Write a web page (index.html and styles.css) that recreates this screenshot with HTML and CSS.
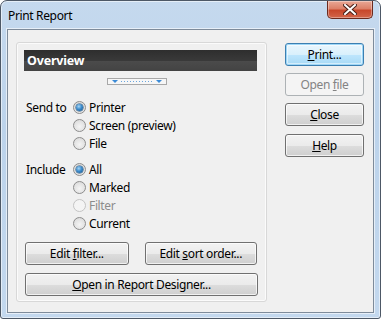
FILE: index.html
```html
<!DOCTYPE html>
<html lang="en">
<head>
  <meta charset="UTF-8" />
  <title>Print Report</title>
  <link rel="stylesheet" href="styles.css">
</head>
<body>
  <div class="window">
    <div class="titlebar">
      <span class="title">Print Report</span>
      <div class="close-btn">
        <svg width="14" height="11" viewBox="0 0 14 11">
          <path d="M2 1 L12 10 M12 1 L2 10" stroke="#4a2018" stroke-width="4" stroke-linecap="square"/>
          <path d="M2 1 L12 10 M12 1 L2 10" stroke="#fff" stroke-width="2" stroke-linecap="square"/>
        </svg>
      </div>
    </div>

    <div class="client">
      <!-- left group -->
      <div class="panel">
        <div class="panel-head">Overview</div>
        <div class="splitter">
          <svg width="58" height="5" viewBox="0 0 58 5">
            <path d="M4 1 L10 1 L7 4 Z" fill="#3a8ad6"/>
            <path d="M48 1 L54 1 L51 4 Z" fill="#3a8ad6"/>
            <line x1="13" y1="2.5" x2="46" y2="2.5" stroke="#6aa6de" stroke-width="1" stroke-dasharray="1 2"/>
          </svg>
        </div>

        <div class="group first">
          <div class="row">
            <span class="opt-label">Send to</span>
            <span class="radio checked"></span><span>Printer</span>
          </div>
          <div class="row">
            <span class="opt-label"></span>
            <span class="radio"></span><span>Screen (preview)</span>
          </div>
          <div class="row">
            <span class="opt-label"></span>
            <span class="radio"></span><span>File</span>
          </div>
        </div>

        <div class="group">
          <div class="row">
            <span class="opt-label">Include</span>
            <span class="radio checked"></span><span>All</span>
          </div>
          <div class="row">
            <span class="opt-label"></span>
            <span class="radio"></span><span>Marked</span>
          </div>
          <div class="row disabled">
            <span class="opt-label"></span>
            <span class="radio"></span><span>Filter</span>
          </div>
          <div class="row">
            <span class="opt-label"></span>
            <span class="radio"></span><span>Current</span>
          </div>
        </div>

        <div class="btn-row">
          <button class="btn filter-btn">Edit <u>f</u>ilter...</button>
          <button class="btn sort-btn">Edit <u>s</u>ort order...</button>
        </div>
        <button class="btn designer-btn"><u>O</u>pen in Report Designer...</button>
      </div>

      <!-- right buttons -->
      <div class="side">
        <button class="btn default"><u>P</u>rint...</button>
        <button class="btn" disabled>Open <u>f</u>ile</button>
        <button class="btn"><u>C</u>lose</button>
        <button class="btn help-btn"><u>H</u>elp</button>
      </div>
    </div>
  </div>
</body>
</html>
```

FILE: styles.css
```css
body {
  margin: 0;
  padding: 0;
  font-family: 'Noto Sans', 'Open Sans', sans-serif;
  font-size: 12px;
  letter-spacing: -0.35px;
  color: #000;
  background: #fff;
}

.window {
  width: 381px;
  height: 319px;
  box-sizing: border-box;
  border: 1px solid #4d5866;
  border-radius: 7px 7px 3px 3px;
  background: linear-gradient(to bottom, #c5d9ee 0%, #bcd3eb 40%, #c3d8ee 100%);
  box-shadow: inset 0 0 0 1px rgba(255, 255, 255, 0.55);
  display: flex;
  flex-direction: column;
  overflow: hidden;
}

.titlebar {
  height: 28px;
  display: flex;
  align-items: flex-start;
  justify-content: space-between;
}

.title {
  margin: 7px 0 0 7px;
  line-height: 16px;
  color: #000;
}

.close-btn {
  width: 46px;
  height: 18px;
  margin-right: 7px;
  box-sizing: border-box;
  border: 1px solid #6b2a1e;
  border-top: none;
  border-radius: 0 0 5px 5px;
  background: linear-gradient(to bottom, #e9a896 0%, #dc8068 45%, #c8472b 55%, #d2654a 100%);
  box-shadow: inset 0 0 0 1px rgba(255, 255, 255, 0.35);
  display: flex;
  align-items: center;
  justify-content: center;
}

.client {
  flex: 1;
  margin: 0 6px 5px 6px;
  background: #f0f0f0;
  border: 1px solid #7e8b9a;
  box-shadow: 0 0 0 1px rgba(255, 255, 255, 0.6);
  display: flex;
  align-items: flex-start;
  padding: 12px 0 0 8px;
}

.panel {
  width: 251px;
  height: 260px;
  box-sizing: border-box;
  border: 1px solid #d8d8d8;
  border-radius: 3px;
  box-shadow: inset 0 0 0 1px #fbfbfb;
  padding: 7px 9px 0 7px;
}

.panel-head {
  height: 21px;
  background: linear-gradient(to bottom, #2e2e2e 0%, #393939 50%, #4b4b4b 52%, #434343 100%);
  color: #fff;
  font-weight: bold;
  font-size: 12.5px;
  letter-spacing: -0.2px;
  line-height: 21px;
  padding-left: 3px;
}

.splitter {
  width: 60px;
  height: 7px;
  box-sizing: border-box;
  margin: 7px 0 0 83px;
  border: 1px solid #a8a8a8;
  background: #f6f6f6;
  display: flex;
}

.group {
  margin-top: 8px;
  padding-left: 2px;
}

.group.first {
  margin-top: 13px;
}

.row {
  height: 18px;
  display: flex;
  align-items: center;
}

.opt-label {
  width: 47px;
}

.radio {
  width: 13px;
  height: 13px;
  box-sizing: border-box;
  border-radius: 50%;
  border: 1px solid #8d8d8d;
  background: radial-gradient(circle at 50% 60%, #f4f4f4 0%, #e2e2e2 60%, #d2d2d2 100%);
  margin-right: 3px;
  display: flex;
  align-items: center;
  justify-content: center;
}

.radio.checked::after {
  content: "";
  width: 7px;
  height: 7px;
  border-radius: 50%;
  background: radial-gradient(circle at 40% 35%, #a8d6f5 0%, #3d8ccc 45%, #114f86 100%);
  box-shadow: 0 0 0 0.5px #1e4d75;
}

.row.disabled {
  color: #8c8c8c;
}

.row.disabled .radio {
  border-color: #c4c4c4;
  background: #f4f4f4;
}

.btn {
  font-family: inherit;
  font-size: 12px;
  letter-spacing: -0.35px;
  color: #000;
  height: 23px;
  padding: 0;
  box-sizing: border-box;
  border: 1px solid #707070;
  border-radius: 3px;
  background: linear-gradient(to bottom, #f2f2f2 0%, #ebebeb 50%, #dddddd 51%, #cfcfcf 100%);
  box-shadow: inset 0 0 0 1px rgba(255, 255, 255, 0.7);
  display: block;
}

.btn u {
  text-underline-offset: 1px;
}

.btn-row {
  display: flex;
  gap: 16px;
  margin: 10px 0 0 1px;
}

.filter-btn {
  width: 104px;
}

.sort-btn {
  width: 113px;
}

.designer-btn {
  width: 233px;
  margin: 8px 0 0 1px;
}

.side {
  width: 79px;
  margin: 1px 0 0 18px;
  display: flex;
  flex-direction: column;
  gap: 7px;
}

.side .btn {
  width: 79px;
}

.btn.default {
  border-color: #3c7fb1;
  background: linear-gradient(to bottom, #eaf6fd 0%, #d9f0fc 50%, #bee6fd 51%, #a7d9f5 100%);
  box-shadow: inset 0 0 0 1px #9fd7f7, inset 0 0 0 2px rgba(255, 255, 255, 0.5);
}

.btn:disabled {
  border-color: #adb2b5;
  background: #f4f4f4;
  color: #838383;
  box-shadow: none;
}

.help-btn {
  margin-top: 1px;
}
```
